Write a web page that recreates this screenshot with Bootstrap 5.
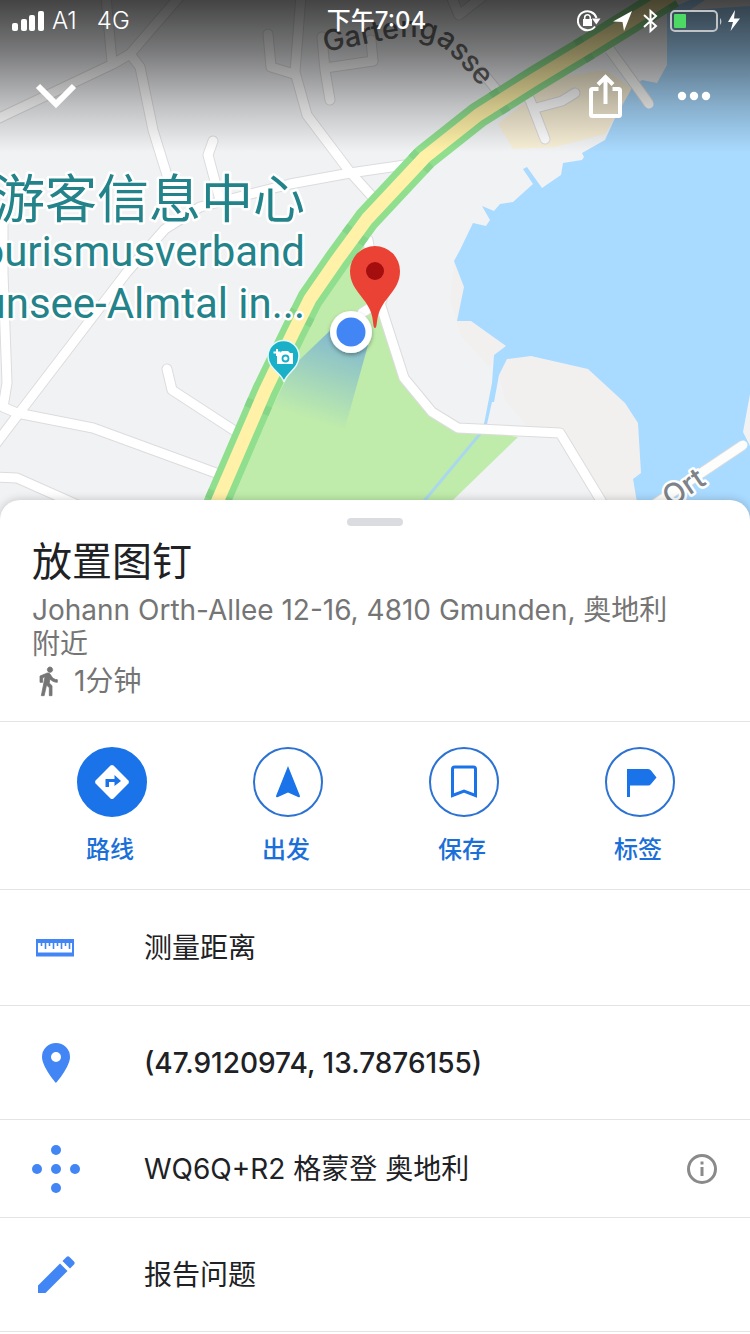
<!DOCTYPE html>
<html lang="zh-CN">
<head>
<meta charset="utf-8">
<meta name="viewport" content="width=device-width, initial-scale=1">
<title>放置图钉</title>
<link href="https://cdn.jsdelivr.net/npm/bootstrap@5.3.0/dist/css/bootstrap.min.css" rel="stylesheet">
<style>
  body { font-family: Inter, "Noto Sans CJK SC", sans-serif; color: #202124; background: #fff; }
  svg { display: block; flex: none; }
  .map-area { height: 520px; background: #f1f3f4; }
  .map-canvas { position: absolute; inset: 0; width: 100%; height: 100%; }
  .map-shade { position: absolute; inset: 0 0 auto; height: 152px; background: linear-gradient(rgba(0,0,0,.72), rgba(0,0,0,.5) 33%, rgba(0,0,0,.2) 70%, rgba(0,0,0,0)); }
  .poi-latin { font-family: Roboto, Inter, sans-serif; }
  .status-line { display: grid; grid-template-columns: 1fr auto 1fr; height: 42px; padding: 0 9px 0 12px; font-size: 24px; line-height: 42px; }
  .carrier { font-weight: 300; }
  .tool-line { height: 108px; padding: 0 32px; }
  .bare { background: none; border: 0; padding: 0; color: inherit; }
  .sheet { margin-top: -20px; background: #fff; border-radius: 20px 20px 0 0; box-shadow: 0 0 10px rgba(0,0,0,.2); }
  .grabber { width: 56px; height: 8px; border-radius: 4px; background: #dadce0; }
  .sheet-head { padding: 18px 32px 20px; border-bottom: 1px solid #e4e4e4; }
  .place-name { font-size: 40px; line-height: 54px; margin: 9px 0 4px; font-weight: 400; }
  .addr { padding-right: 32px; font-size: 28px; line-height: 34px; color: #757575; }
  .walk { font-size: 28px; line-height: 40px; gap: 10px; color: #757575; }
  .acts { padding: 25px 22px 21px 24px; border-bottom: 1px solid #e4e4e4; }
  .act { color: #1a6fd8; font-size: 24px; line-height: 36px; font-weight: 500; gap: 15px; }
  .act-label { padding-right: 4px; }
  .disc { width: 70px; height: 70px; border-radius: 50%; border: 2px solid #2b72d2; color: #1a73e8; }
  .disc.solid { background: #1a73e8; border-color: #1a73e8; }
  .entry { display: grid; grid-template-columns: 48px 1fr auto; column-gap: 64px; align-items: center; padding: 0 32px; border-bottom: 1px solid #e4e4e4; font-size: 28px; line-height: 40px; }
  .entry.tall { min-height: 114px; }
  .entry.first { min-height: 116px; }
  .entry.short { min-height: 98px; }
  .entry .bare { text-align: left; }
  .lead-ico { color: #4285f4; justify-self: center; }
</style>
</head>
<body>
<header class="map-area position-relative overflow-hidden text-white">
  <svg class="map-canvas" viewBox="0 0 750 520" preserveAspectRatio="xMidYMin slice" role="img" aria-label="地图">
    <defs>
      <g id="streets" fill="none" stroke-linejoin="round" stroke-linecap="round">
        <path d="M-5 120 113 64 130 54 180-4M106-4 112 62M130 54 140 67 153 130 170 185M213 141 208 155 220 200M301-4 295 72 307 115 350 172 378 203M268 34 271 67 294 74M322 37 325 70 330 100M325 68 373 61 371 40M482 72 500 94M451-4 459 15 482-3"/>
        <path d="M-5 445 20 412 127 272 165 229 200 207 290 184 350 173 405 165M3 225 3 273 7 383 3 407 17 413 93 428 216 473M167 369 172 390 238 433M-5 477 17 478 80 506"/>
        <path d="M526 95 530 100 545 139M536 108 562 101 575 93"/>
        <path d="M362 313 382 300M368 240 376 290 386 322 404 378 432 412 458 428 560 433 620 532"/>
      </g>
      <linearGradient id="beam" gradientUnits="userSpaceOnUse" x1="348" y1="335" x2="318" y2="422">
        <stop offset="0" stop-color="#4285f4" stop-opacity=".5"/><stop offset="1" stop-color="#4285f4" stop-opacity="0"/>
      </linearGradient>
      <filter id="soft" x="-30%" y="-30%" width="160%" height="160%"><feDropShadow dx="0" dy="2" stdDeviation="2" flood-opacity=".35"/></filter>
    </defs>
    <rect x="-1000" width="2750" height="520" fill="#f1f2f4"/>
    <path d="M454 261 464 287 457 321 471 321 506 346 494 355 490 368 461 336 450 300ZM507 359 531 356 588 369 625 403 638 423 641 473 633 479 640 520 613 520 560 434 530 430 505 400 499 375Z" fill="#f2f0ee"/>
    <path d="M498 124 555 78 605 70 632 88 605 134 555 147 513 149Z" fill="#f8efd6"/>
    <path d="M667 10 667 65 657 83 642 80 632 88 615 118 605 140 582 153 584 157 582 160 563 163 561 175 542 188 527 167 523 169 533 184 513 202 500 204 494 211 482 206 490 220 486 226 473 223 460 250 454 261 464 287 457 321 471 321 506 346 494 355 492 383 484 424 487 424 492 402 494 402 499 375 507 359 531 356 588 369 625 403 638 423 641 473 633 479 640 520 1750 520 1750 0 690 0Z" fill="#a9daff"/>
    <path d="M752 383 743 432 752 450ZM750 0 705 0 690 10 750 6Z" fill="#f1f2f4"/>
    <path d="M367 235 376 290 386 322 404 378 432 412 458 428 518 437 453 500 430 520 205 520 293 333 337 258Z" fill="#bfecab"/>
    <path d="M486 423 480 434 415 512" fill="none" stroke="#a9d8ee" stroke-width="3"/>
    <use href="#streets" stroke="#dcdcde" stroke-width="11"/>
    <use href="#streets" stroke="#fff" stroke-width="9"/>
    <path d="M610 50 645 98 649 104M655 504 743 445" fill="none" stroke="#d9dcdf" stroke-width="11"/>
    <path d="M610 50 645 98 649 104M655 504 743 445" fill="none" stroke="#fdfdfb" stroke-width="9" stroke-linecap="round"/>
    <g fill="none" stroke-linejoin="round">
      <path d="M672-5 588 47 535 79 478 115 425 157 367 219 337 260 310 299 293 333 265 391 218 500 208 524" stroke="#90df8f" stroke-width="26"/>
      <path d="M672-5 588 47 535 79 478 115 425 157 367 219 337 260 310 299 293 333 265 391 218 500 208 524" stroke="#85d588" stroke-width="26" stroke-dasharray="9 90"/>
      <path d="M672-5 588 47 535 79 478 115 425 157 367 219 337 260 310 299 293 333 265 391 218 500 208 524" stroke="#fff1a8" stroke-width="13"/>
    </g>
    <path d="M339 322 293 366 270 412 345 428 368 345Z" fill="url(#beam)"/>
    <path id="gasse" d="M325 52 375 42C400 36 420 35 436 43 450 51 462 66 482 88" fill="none"/>
    <text font-size="29" font-weight="500" fill="#666"><textPath href="#gasse">Gartengasse</textPath></text>
    <text x="671" y="508" transform="rotate(-34 671 508)" font-size="29" font-weight="500" fill="#7d8388" stroke="#fff" stroke-width="5" stroke-linejoin="round" paint-order="stroke">Ort</text>
    <g fill="#23838a" stroke="#fff" stroke-width="5" stroke-linejoin="round" paint-order="stroke" text-anchor="end">
      <text x="305" y="218" font-size="52">游客信息中心</text>
      <text class="poi-latin" x="305" y="266" font-size="42">Tourismusverband</text>
      <text class="poi-latin" x="305" y="318" font-size="42">Traunsee-Almtal in...</text>
    </g>
    <path d="M284 382C282 373 268 369 268 356A15.500 15.500 0 0 1 299 356C299 369 286 373 284 382Z" fill="#19b0c8" stroke="#e4fafa" stroke-width="1.500"/>
    <path d="M277 353h3l2-2h6l2 2h3v11h-16Z" fill="#fff"/><circle cx="285.500" cy="358.500" r="3" fill="#fff" stroke="#19b0c8" stroke-width="1.800"/>
    <path d="M277 349v7M273.500 352.500h7" stroke="#fff" stroke-width="2"/>
    <circle cx="351" cy="332" r="21" fill="#fff" filter="url(#soft)"/><circle cx="351" cy="332" r="14.500" fill="#4285f4"/>
    <path d="M375 328C373 328 373.500 322 372 316 368 298 350 291 350 271A25 25 0 0 1 400 271C400 291 382 298 378 316 376.500 322 377 328 375 328Z" fill="#ea4335"/><circle cx="375" cy="271" r="9" fill="#a50e0e"/>
  </svg>
  <div class="map-shade"></div>

  <div class="status-line position-relative">
    <div class="carrier d-flex align-items-center">
      <svg class="me-2" width="32" height="20" viewBox="0 0 32 20" fill="#fff"><rect y="12" width="6" height="8" rx="2"/><rect x="9" y="8" width="6" height="12" rx="2"/><rect x="17" y="4" width="6" height="16" rx="2"/><rect x="26" width="6" height="20" rx="2"/></svg>
      <span>A1</span><span class="ms-3 ps-1">4G</span>
    </div>
    <div class="fw-medium">下午7:04</div>
    <div class="d-flex align-items-center justify-content-end">
      <svg width="164" height="26" viewBox="0 0 164 26" fill="none" stroke="#fff" stroke-width="2">
        <path d="M18 18.500A9.500 9.500 0 1 1 19.500 10"/><path d="M15 10.500h8.500l-4.200 6Z" fill="#fff" stroke="none"/><rect x="6" y="11" width="9" height="7" fill="#fff" stroke="none"/><path d="M7.700 12V9.500a2.800 2.800 0 0 1 5.600 0v2.500" stroke-width="1.600"/>
        <path d="M55 3 36 13.500 45.500 14 47 23Z" fill="#fff" stroke="none"/>
        <path d="M67 7 79 18 73.500 23V3L79 8 67 19"/>
        <rect x="94" y="3" width="46" height="20" rx="4" stroke="#bfc3c6"/><path d="M143 10a5 5 0 0 1 0 7Z" fill="#bfc3c6" stroke="none"/><rect x="97" y="6" width="12" height="14" rx="1" fill="#4cd964" stroke="none"/>
        <path d="M158 2 151 14h5l-2.500 9L163 10.500h-6Z" fill="#fff" stroke="none"/>
      </svg>
    </div>
  </div>
  <div class="tool-line position-relative d-flex align-items-center">
    <button class="bare me-auto" type="button" aria-label="收起"><svg width="48" height="32" viewBox="0 0 48 32" fill="none" stroke="#fff" stroke-width="6"><path d="M6 6 24 24 42 6"/></svg></button>
    <button class="bare" type="button" aria-label="分享"><svg width="36" height="48" viewBox="0 0 36 48" fill="none" stroke="#fff" stroke-width="4"><path d="M12.500 17H6.500Q5 17 5 18.500V42.500Q5 44 6.500 44H32.500Q34 44 34 42.500V18.500Q34 17 32.500 17H26.500" stroke-linejoin="round"/><path d="M19.500 32V5M12 12.500 19.500 5 27 12.500"/></svg></button>
    <button class="bare ms-5" type="button" aria-label="更多"><svg width="48" height="32" viewBox="0 0 48 32" fill="#fff"><circle cx="12" cy="16" r="4.200"/><circle cx="24" cy="16" r="4.200"/><circle cx="36" cy="16" r="4.200"/></svg></button>
  </div>
</header>

<main class="sheet position-relative">
  <section class="sheet-head">
    <div class="grabber mx-auto"></div>
    <h1 class="place-name">放置图钉</h1>
    <div class="addr">Johann Orth-Allee 12-16, 4810 Gmunden, 奥地利附近</div>
    <div class="walk d-flex align-items-center">
      <svg width="32" height="32" viewBox="0 0 24 24" fill="currentColor"><path d="M13.500 5.500c1.100 0 2-.9 2-2s-.9-2-2-2-2 .9-2 2 .9 2 2 2zM9.800 8.900 7 23h2.100l1.800-8 2.100 2v6h2v-7.500l-2.100-2 .6-3C14.800 12 16.800 13 19 13v-2c-1.900 0-3.500-1-4.300-2.400l-1-1.600c-.4-.6-1-1-1.700-1-.3 0-.5.1-.8.1L6 8.300V13h2V9.600l1.800-.7" stroke="currentColor" stroke-width=".6"/></svg>
      <span>1分钟</span>
    </div>
  </section>

  <nav class="acts row g-0 row-cols-4">
    <div class="col"><button type="button" class="bare act w-100 d-flex flex-column align-items-center">
      <span class="disc solid d-flex align-items-center justify-content-center"><svg width="36" height="36" viewBox="0 0 36 36"><path d="M16.500 1.600 1.600 16.500Q.4 18 1.600 19.500L16.500 34.400Q18 35.600 19.500 34.400L34.400 19.500Q35.600 18 34.400 16.500L19.500 1.600Q18 .4 16.500 1.600Z" fill="#fff"/><path d="M11.500 23V15h9v-4l6.500 6-6.500 5v-4H15v5Z" fill="#1a73e8"/></svg></span>
      <span class="act-label">路线</span></button></div>
    <div class="col"><button type="button" class="bare act w-100 d-flex flex-column align-items-center">
      <span class="disc d-flex align-items-center justify-content-center"><svg width="36" height="36" viewBox="0 0 36 36" fill="currentColor"><path d="M18 2 30 32Q30 34 28 33L18 28.500 8 33Q6 34 6 32Z"/></svg></span>
      <span class="act-label">出发</span></button></div>
    <div class="col"><button type="button" class="bare act w-100 d-flex flex-column align-items-center">
      <span class="disc d-flex align-items-center justify-content-center"><svg width="36" height="36" viewBox="0 0 36 36" fill="none" stroke="currentColor" stroke-width="3"><path d="M6.500 31.500V5Q6.500 3 8.500 3H27.500Q29.500 3 29.500 5V31.500L18 27Z"/></svg></span>
      <span class="act-label">保存</span></button></div>
    <div class="col"><button type="button" class="bare act w-100 d-flex flex-column align-items-center">
      <span class="disc d-flex align-items-center justify-content-center"><svg width="36" height="36" viewBox="0 0 36 36" fill="currentColor"><path d="M5 5H26Q28 5 29 6.500L34.500 13.500 29 20Q28 21.500 26 21.500H8V33H5Z"/></svg></span>
      <span class="act-label">标签</span></button></div>
  </nav>

  <section>
    <div class="entry first">
      <svg class="lead-ico" width="40" height="20" viewBox="0 0 40 20" fill="none" stroke="currentColor"><path d="M0 3H38M0 16.500H38" stroke-width="4"/><path d="M1 2V18M37 2V18" stroke-width="2"/><path d="M5.500 3v5M9.500 3v8M13.500 3v5M17.500 3v8M21.500 3v5M25.500 3v8M29.500 3v5M33.500 3v8" stroke-width="1.600"/></svg>
      <button type="button" class="bare">测量距离</button>
    </div>
    <div class="entry tall">
      <svg class="lead-ico" width="28" height="40" viewBox="0 0 28 40" fill="currentColor"><path fill-rule="evenodd" d="M14 0A14 14 0 0 0 0 14C0 24 14 40 14 40S28 24 28 14A14 14 0 0 0 14 0ZM14 9a5 5 0 1 1 0 10 5 5 0 0 1 0-10Z"/></svg>
      <button type="button" class="bare fw-medium">(47.9120974, 13.7876155)</button>
    </div>
    <div class="entry short">
      <svg class="lead-ico" width="48" height="48" viewBox="0 0 48 48" fill="currentColor"><circle cx="24" cy="5" r="5"/><circle cx="5" cy="24" r="5"/><circle cx="24" cy="24" r="5"/><circle cx="43" cy="24" r="5"/><circle cx="24" cy="43" r="5"/></svg>
      <button type="button" class="bare">WQ6Q+R2 格蒙登 奥地利</button>
      <button type="button" class="bare" aria-label="信息"><svg width="32" height="32" viewBox="0 0 32 32" fill="none" stroke="#8a8a8a" stroke-width="3"><circle cx="16" cy="16" r="13.500"/><path d="M16 14v9M16 8.500v3"/></svg></button>
    </div>
    <div class="entry tall">
      <svg class="lead-ico" width="40" height="40" viewBox="0 0 40 40" fill="currentColor"><path d="M2 30.500 24 8.500 31.500 16 9.500 38H2ZM26.500 6 30.500 2Q32 .7 33.500 2L38 6.500Q39.300 8 38 9.500L34 13.500Z"/></svg>
      <button type="button" class="bare">报告问题</button>
    </div>
  </section>
</main>
<script src="https://cdn.jsdelivr.net/npm/bootstrap@5.3.0/dist/js/bootstrap.bundle.min.js"></script>
</body>
</html>
